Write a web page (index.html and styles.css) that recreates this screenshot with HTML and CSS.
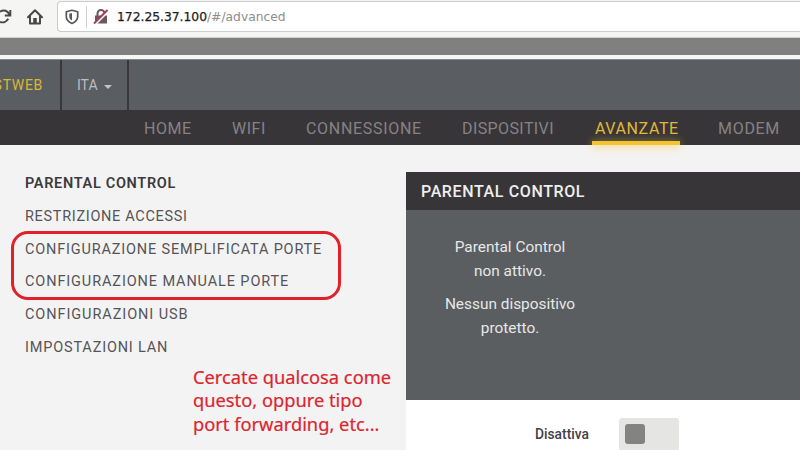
FILE: index.html
```html
<!DOCTYPE html>
<html lang="it">
<head>
<meta charset="utf-8">
<title>Parental Control</title>
<link rel="stylesheet" href="styles.css">
</head>
<body>
<header class="browser">
  <svg class="reload" viewBox="0 0 12 16" width="12" height="16"><path d="M0 2.800C4-.2 8 2 9.500 6M0 12.800c3 1.400 6.500 0 8.300-3M10.300 1v5.500H4.800" fill="none" stroke="#48484a" stroke-width="2"/></svg>
  <svg class="home" viewBox="0 0 16 16" width="16" height="16"><path d="M1 8.200 8 1.300l7 6.900M3 7.500V14.500h10V7.500" fill="none" stroke="#48484a" stroke-width="2" stroke-linejoin="round" stroke-linecap="round"/><path d="M6.200 14V9h3.600v5z" fill="#48484a"/></svg>
  <div class="address">
    <svg class="shield" viewBox="0 0 14 16" width="14" height="16"><path d="M7 1.200 12.700 2.700v4.800c0 3.500-2.700 5.600-5.700 7-3-1.400-5.700-3.500-5.700-7V2.700z" fill="none" stroke="#58585a" stroke-width="1.700" stroke-linejoin="round"/><path d="M7 4v7.500C5 10.400 4.300 9.200 4.300 7.200V4.700z" fill="#58585a"/></svg>
    <span class="divider"></span>
    <svg class="lock" viewBox="0 0 16 16" width="16" height="16"><path d="M4.500 7V4.500a3.500 3.500 0 0 1 7 0V7" fill="none" stroke="#69585f" stroke-width="2"/><path d="M2 6.500h12v8H2z" fill="#69585f"/><path d="M1.700 15.200 15.200 1.700" stroke="#fff" stroke-width="3"/><path d="M1 14.500 14.500 1" stroke="#a83b5c" stroke-width="2"/></svg>
    <span class="url"><b>172.25.37.100</b>/#/advanced</span>
  </div>
</header>
<div class="band"></div>
<div class="topbar">
  <div class="brand">FASTWEB</div>
  <div class="lang">ITA<span class="caret"></span></div>
</div>
<nav class="nav">
  <a class="n-home">HOME</a><a class="n-wifi">WIFI</a><a class="n-conn">CONNESSIONE</a><a class="n-disp">DISPOSITIVI</a><a class="n-adv active">AVANZATE</a><a class="n-modem">MODEM</a>
</nav>
<main class="main">
  <aside class="side">
    <ul class="menu">
      <li class="current">PARENTAL CONTROL</li>
      <li class="m-acc">RESTRIZIONE ACCESSI</li>
      <li class="m-semp">CONFIGURAZIONE SEMPLIFICATA PORTE</li>
      <li class="m-man">CONFIGURAZIONE MANUALE PORTE</li>
      <li class="m-usb">CONFIGURAZIONI USB</li>
      <li class="m-lan">IMPOSTAZIONI LAN</li>
    </ul>
    <div class="highlight"></div>
    <p class="note">Cercate qualcosa come<br>questo, oppure tipo<br>port forwarding, etc...</p>
  </aside>
  <section class="panel">
    <h1>PARENTAL CONTROL</h1>
    <div class="status"><p>Parental Control<br>non attivo.</p><p>Nessun dispositivo<br>protetto.</p></div>
    <div class="control"><span class="label">Disattiva</span><span class="switch"><i></i></span></div>
  </section>
</main>
</body>
</html>
```
FILE: styles.css
```css
* { box-sizing: border-box; }
body { margin: 0; width: 800px; height: 450px; overflow: hidden; background: #f3f3f3; font-family: Roboto, sans-serif; color: #555; }
svg { display: block; flex: none; }
.browser { display: flex; align-items: center; height: 37px; padding-bottom: 4px; background: #f5f5f4; }
.home { margin-left: 15px; }
.address { display: flex; align-items: center; flex: 1; height: 31px; margin: 0 0 0 14px; padding-left: 7px; background: #fff; border: 1px solid #cbcbcb; border-right: 0; border-radius: 4px 0 0 4px; }
.divider { width: 1px; height: 22px; margin: 0 6px 0 7px; background: #d5cfd0; }
.url { margin-left: 8px; font: 12.3px "DejaVu Sans", sans-serif; color: #8d8d8d; white-space: nowrap; }
.url b { font-weight: 400; color: #1c1c1c; -webkit-text-stroke: .25px #1c1c1c; }
.band { height: 22px; background: #808080; border-bottom: 4px solid #f7f7f5; border-top: 1px solid #d0d0d0; }
.topbar { display: flex; height: 51px; background: #5a5d61; border-top: 1px solid #85878a; font-size: 14px; line-height: 51px; }
.brand { display: flex; justify-content: flex-end; width: 62px; padding-right: 17px; border-right: 2px solid #39373a; color: #d9b832; letter-spacing: .7px; }
.lang { display: flex; align-items: center; width: 67px; padding-left: 15px; border-right: 2px solid #39373a; color: #bcbcbe; }
.caret { margin: 3px 0 0 6px; border: 4px solid transparent; border-top-color: #c4c4c5; border-bottom: 0; }
.nav { display: flex; gap: 40px; height: 35px; padding-left: 144px; background: #383538; font-size: 16px; line-height: 35px; color: #858386; white-space: nowrap; }
.nav a { position: relative; flex: none; padding-top: 1px; }
.n-home { width: 48px; letter-spacing: .5px; }
.n-wifi { width: 34px; letter-spacing: .5px; }
.n-conn { width: 116px; letter-spacing: .7px; }
.n-disp { width: 93px; letter-spacing: .4px; }
.n-adv { width: 83px; letter-spacing: .6px; }
.n-modem { width: 62px; letter-spacing: .7px; }
.active { color: #e0b93a; }
.active::after { content: ""; position: absolute; left: -3px; right: -2px; top: 31px; height: 4px; background: #f2c52f; box-shadow: 0 1px 8px rgba(245, 194, 40, .75); }
.main { display: flex; height: 305px; }
.side { position: relative; width: 406px; flex: none; padding: 23px 0 0 25px; }
.menu { margin: 0; padding: 0; list-style: none; font-size: 14.5px; line-height: 32.8px; color: #565457; white-space: nowrap; }
.current { font-weight: 600; color: #3c3a3d; letter-spacing: .68px; }
.m-acc { letter-spacing: .68px; }
.m-semp { letter-spacing: .82px; }
.m-man { letter-spacing: .88px; }
.m-usb { letter-spacing: .92px; }
.m-lan { letter-spacing: .82px; }
.highlight { position: absolute; left: 11px; top: 86px; width: 330px; height: 69px; border: 3px solid #e0202a; border-radius: 17px; }
.note { margin: 0 0 0 168px; font: 18.3px/23.5px "Noto Sans", sans-serif; color: #db2530; -webkit-text-stroke: .2px #db2530; white-space: nowrap; }
.panel { flex: 1; margin-top: 27px; background: #fff; }
h1 { margin: 0; height: 38px; padding-left: 15px; background: #383538; color: #eee; font-size: 16px; font-weight: 500; line-height: 40px; letter-spacing: .62px; }
.status { height: 190px; padding: 25px 0 0 24px; background: #5a5e61; color: #e7e8e9; font-size: 15.4px; line-height: 24px; text-align: center; }
.status p { width: 160px; margin: 0 0 9px; white-space: nowrap; }
.control { display: flex; align-items: center; height: 68px; padding-left: 129px; }
.label { width: 84px; font-size: 13.8px; font-weight: 500; color: #434144; }
.switch { width: 60px; height: 33px; padding: 6px; background: #e5e5e3; border-radius: 3px; }
.switch i { display: block; width: 20px; height: 20px; background: #838383; border-radius: 3px; }
```
